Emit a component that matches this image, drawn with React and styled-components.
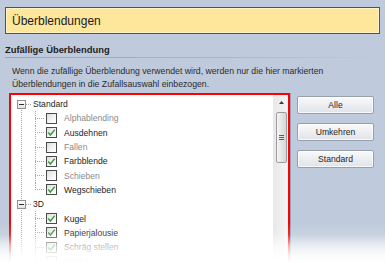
import React from "react";
import styled, { createGlobalStyle } from "styled-components";

const Global = createGlobalStyle`
  html, body { margin: 0; height: 100%; overflow: hidden; }
  body {
    background: #bfcbdc;
    font-family: "Liberation Sans", Arial, sans-serif;
    color: #1e1e1e;
  }
`;

const Page = styled.div`
  padding: 7px 5px 0 5px;
`;

const Header = styled.div`
  box-sizing: border-box;
  height: 27px;
  border: 1px solid #4f5358;
  box-shadow: inset 0 0 0 1px #fff3c6;
  background: #fee69b;
  display: flex;
  align-items: center;
  padding-left: 6px;
  font-size: 12px;
  color: #1b1b1b;
`;

const SectionTitle = styled.div`
  margin-top: 9px;
  font-weight: bold;
  font-size: 9.4px;
  line-height: 14px;
  padding-bottom: 1px;
  background: linear-gradient(to right, #98a6b7 0%, #aab6c5 60%, rgba(191, 203, 220, 0) 100%)
    left bottom / 100% 1px no-repeat;
`;

const Description = styled.p`
  margin: 7px 0 0 0;
  padding-left: 7px;
  font-size: 8.7px;
  line-height: 13px;
  color: #2a2a2a;
`;

const Content = styled.div`
  display: flex;
  align-items: flex-start;
  margin-top: 2px;
  padding-left: 4px;
`;

const ListBox = styled.div`
  box-sizing: border-box;
  width: 281px;
  height: 171px;
  overflow: hidden;
  border: 2px solid #ff0000;
  border-bottom: none;
  box-shadow: 1px 0 0 rgba(80, 90, 110, 0.35);
  background: #fff;
  display: flex;
`;

const Tree = styled.div`
  flex: 1;
  padding-top: 2px;
  background: repeating-linear-gradient(to bottom, #a8a8a8 0 1px, transparent 1px 2px)
    10px 13px / 1px 100% no-repeat;
`;

const GroupRow = styled.div`
  display: flex;
  align-items: center;
  height: 14.3px;
  padding-left: 6px;
  font-size: 8.6px;
  color: #1e1e1e;
`;

const Expander = styled.span`
  box-sizing: border-box;
  width: 9px;
  height: 9px;
  border: 1px solid #8e9196;
  background: linear-gradient(#ffffff, #e4e4e4);
  display: flex;
  align-items: center;
  justify-content: center;
  &::before {
    content: "";
    width: 5px;
    height: 1px;
    background: #2f2f2f;
  }
`;

const HLine = styled.span`
  width: 6px;
  height: 1px;
  margin-right: 1px;
  background: repeating-linear-gradient(to right, #a8a8a8 0 1px, transparent 1px 2px);
`;

const ItemRow = styled.div`
  display: flex;
  align-items: center;
  height: 14.3px;
  padding-left: 24px;
  font-size: 8.6px;
  color: ${(p) => (p.$checked ? "#1e1e1e" : "#8a8a8a")};
`;

const Connector = styled.span`
  align-self: stretch;
  width: 9px;
  margin-right: 2px;
  background:
    repeating-linear-gradient(to bottom, #a8a8a8 0 1px, transparent 1px 2px) left top /
      1px ${(p) => (p.$last ? "50%" : "100%")} no-repeat,
    repeating-linear-gradient(to right, #a8a8a8 0 1px, transparent 1px 2px) left center /
      100% 1px no-repeat;
`;

const Box = styled.span`
  box-sizing: border-box;
  width: 11px;
  height: 11px;
  margin-right: 7px;
  border: 1px solid #4a4a4a;
  background: linear-gradient(135deg, #dcdcdc, #f6f6f6 60%, #ffffff);
  display: flex;
  align-items: center;
  justify-content: center;
`;

const Scrollbar = styled.div`
  box-sizing: border-box;
  width: 15px;
  border-left: 1px solid #e9e9e9;
  background: linear-gradient(to right, #e8e8e8, #f5f5f5);
  display: flex;
  flex-direction: column;
  align-items: center;
`;

const ArrowUp = styled.div`
  height: 15px;
  display: flex;
  align-items: center;
  justify-content: center;
`;

const Thumb = styled.div`
  box-sizing: border-box;
  margin-top: 2px;
  width: 11px;
  height: 51px;
  border: 1px solid #9d9d9d;
  border-radius: 2px;
  background: linear-gradient(to right, #f6f6f6, #e4e4e4 50%, #d6d6d6);
  display: flex;
  flex-direction: column;
  align-items: center;
  justify-content: center;
  gap: 1px;
`;

const Grip = styled.span`
  width: 5px;
  height: 1px;
  background: #5d5d5d;
`;

const ButtonColumn = styled.div`
  display: flex;
  flex-direction: column;
  gap: 9px;
  margin-top: 3px;
  margin-left: 7px;
`;

const Button = styled.button`
  box-sizing: border-box;
  width: 77px;
  height: 18px;
  padding: 0;
  border: 1px solid #97a1ad;
  border-radius: 2px;
  box-shadow: inset 0 0 0 1px rgba(255, 255, 255, 0.75);
  background: linear-gradient(#f9fafb, #eceef1 50%, #e0e3e8);
  font-family: "Liberation Sans", Arial, sans-serif;
  font-size: 8.6px;
  color: #1e1e1e;
`;

const Fade = styled.div`
  position: fixed;
  left: 0;
  right: 0;
  bottom: 0;
  height: 42px;
  pointer-events: none;
  background: linear-gradient(
    rgba(255, 255, 255, 0),
    rgba(255, 255, 255, 0.15) 30%,
    rgba(255, 255, 255, 0.65) 55%,
    rgba(255, 255, 255, 0.92) 80%,
    #fff
  );
`;

const Check = () => (
  <svg width="9" height="9" viewBox="0 0 9 9">
    <polyline
      points="1.3,4.6 3.4,7 7.8,1.6"
      fill="none"
      stroke="#3b9b3b"
      strokeWidth="1.5"
    />
  </svg>
);

const groups = [
  {
    name: "Standard",
    complete: true,
    items: [
      ["Alphablending", false],
      ["Ausdehnen", true],
      ["Fallen", false],
      ["Farbblende", true],
      ["Schieben", false],
      ["Wegschieben", true],
    ],
  },
  {
    name: "3D",
    complete: false,
    items: [
      ["Kugel", true],
      ["Papierjalousie", true],
      ["Schräg stellen", true],
      ["Würfel", false],
    ],
  },
];

export default function App() {
  return (
    <Page>
      <Global />
      <Header>Überblendungen</Header>
      <SectionTitle>Zufällige Überblendung</SectionTitle>
      <Description>
        Wenn die zufällige Überblendung verwendet wird, werden nur die hier markierten
        <br />
        Überblendungen in die Zufallsauswahl einbezogen.
      </Description>
      <Content>
        <ListBox>
          <Tree>
            {groups.map((g) => (
              <React.Fragment key={g.name}>
                <GroupRow>
                  <Expander />
                  <HLine />
                  {g.name}
                </GroupRow>
                {g.items.map(([label, checked], i) => (
                  <ItemRow key={label} $checked={checked}>
                    <Connector $last={g.complete && i === g.items.length - 1} />
                    <Box>{checked && <Check />}</Box>
                    {label}
                  </ItemRow>
                ))}
              </React.Fragment>
            ))}
          </Tree>
          <Scrollbar>
            <ArrowUp>
              <svg width="5" height="3" viewBox="0 0 5 3">
                <polygon points="0,3 2.5,0 5,3" fill="#3c3c3c" />
              </svg>
            </ArrowUp>
            <Thumb>
              <Grip />
              <Grip />
              <Grip />
            </Thumb>
          </Scrollbar>
        </ListBox>
        <ButtonColumn>
          <Button>Alle</Button>
          <Button>Umkehren</Button>
          <Button>Standard</Button>
        </ButtonColumn>
      </Content>
      <Fade />
    </Page>
  );
}
